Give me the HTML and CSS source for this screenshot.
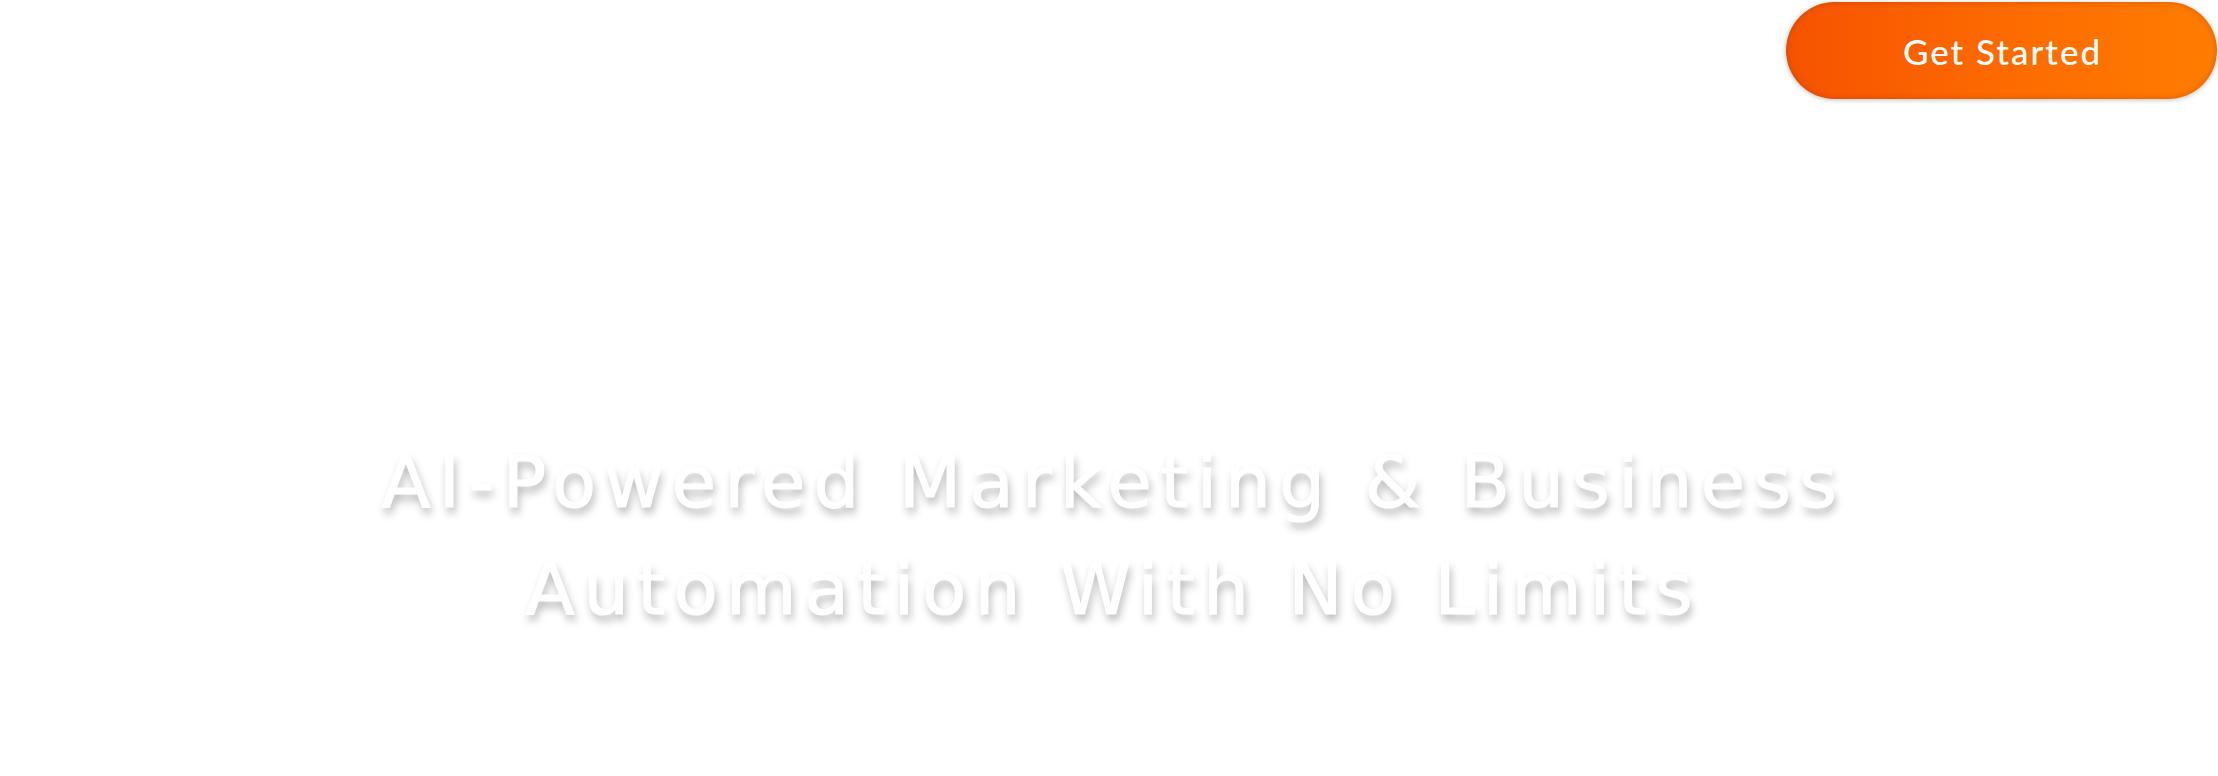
FILE: index.html
```html
<!DOCTYPE html>
<html lang="en">
<head>
<meta charset="utf-8">
<title>AI-Powered Marketing</title>
<link rel="stylesheet" href="styles.css">
</head>
<body>
<div class="page">
  <header class="topbar">
    <a class="cta" href="#">Get Started</a>
  </header>
  <section class="hero">
    <h1 class="hero-title">AI-Powered Marketing &amp; Business<br>Automation With No Limits</h1>
  </section>
</div>
</body>
</html>
```
FILE: styles.css
```css
html, body {
  margin: 0;
  padding: 0;
  background: #ffffff;
}
body {
  font-family: "Lato", "Liberation Sans", sans-serif;
}
.page {
  width: 2218px;
  height: 776px;
  overflow: hidden;
  display: flex;
  flex-direction: column;
}
.topbar {
  display: flex;
  justify-content: flex-end;
  padding: 2px 1px 0 0;
}
.cta {
  width: 431px;
  height: 97px;
  box-sizing: border-box;
  border-radius: 49px;
  background: linear-gradient(90deg, #f65300 0%, #fd6a00 50%, #ff7d00 100%);
  box-shadow: 0 1px 5px rgba(0, 0, 0, 0.25), inset 0 0 6px rgba(140, 40, 0, 0.35);
  color: #ffffff;
  text-decoration: none;
  font-size: 35px;
  font-weight: 500;
  display: flex;
  align-items: center;
  justify-content: center;
  letter-spacing: 2px;
  padding-left: 2px;
}
.hero {
  padding: 330px 0 0 0;
  display: flex;
  justify-content: center;
}
.hero-title {
  margin: 0;
  text-align: center;
  color: #ffffff;
  font-family: "DejaVu Sans", "Liberation Sans", sans-serif;
  font-size: 72px;
  font-weight: 400;
  line-height: 107px;
  letter-spacing: 8.4px;
  padding-left: 8.4px;
  -webkit-text-stroke: 1.2px #ffffff;
  text-shadow: 2px 6px 8px rgba(0, 0, 0, 0.3);
}
```
